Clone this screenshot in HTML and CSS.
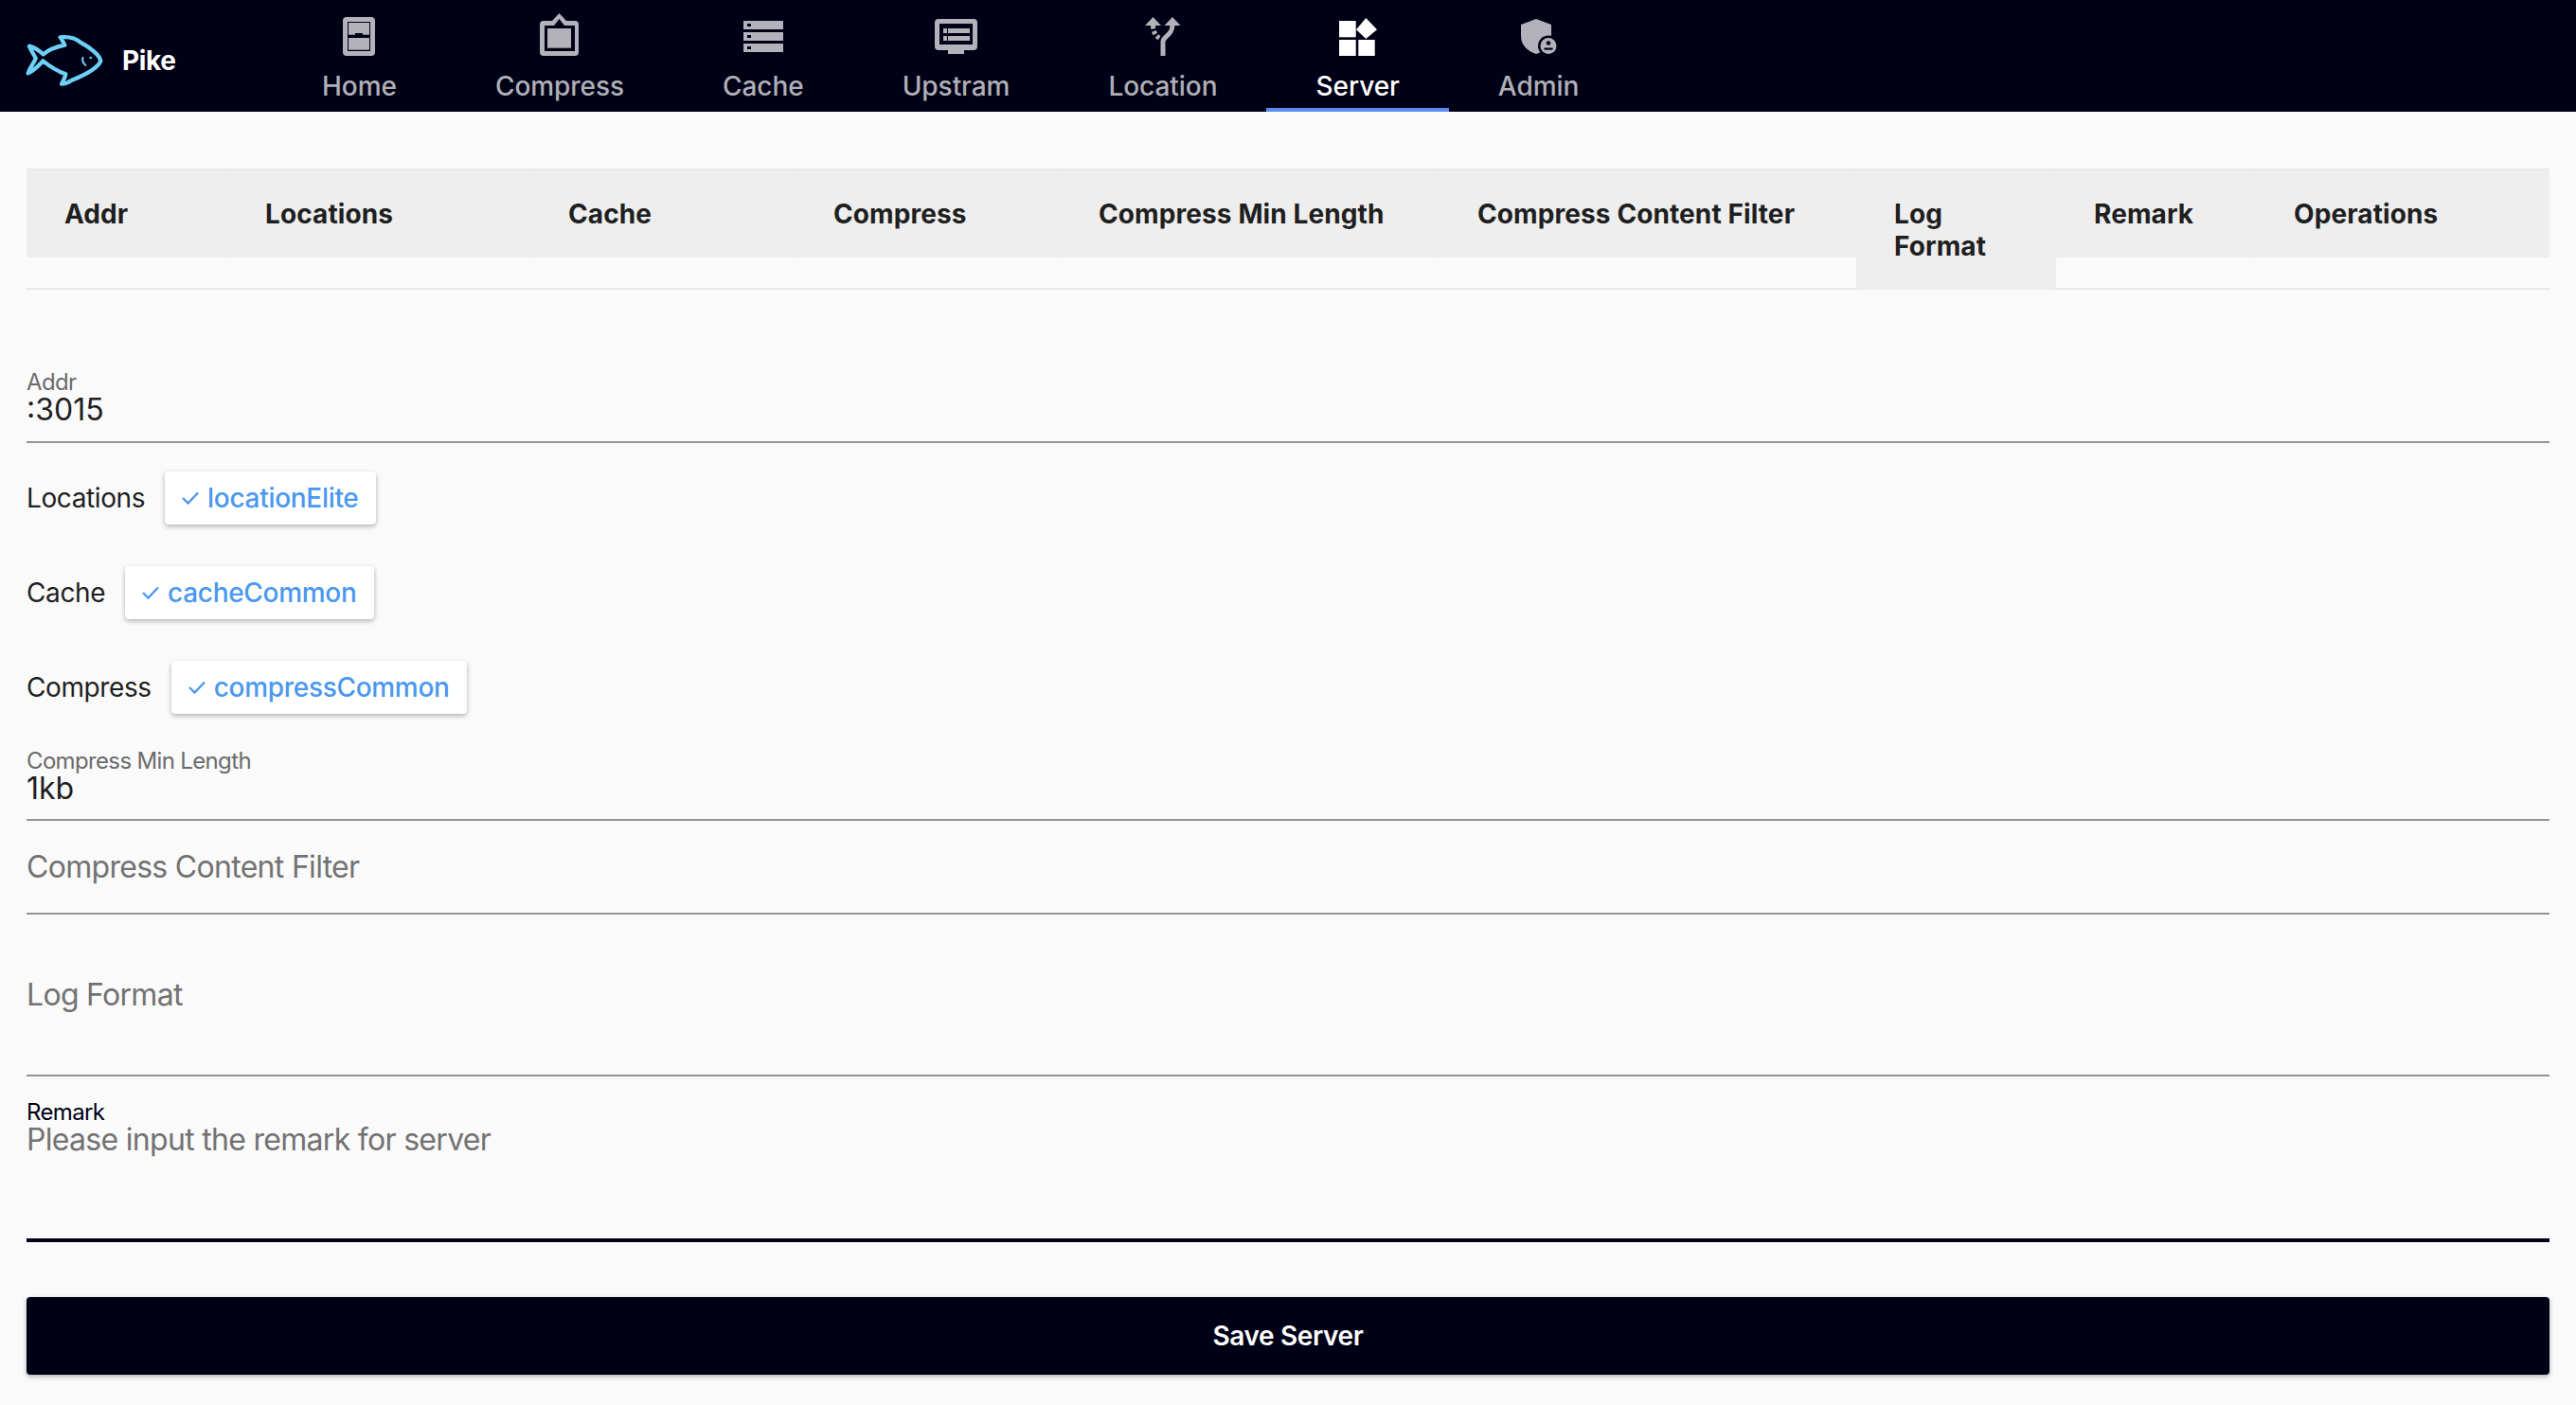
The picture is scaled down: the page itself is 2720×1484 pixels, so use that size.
FILE: index.html
```html
<!DOCTYPE html>
<html lang="en">

<head>
    <meta charset="UTF-8">
    <title>Pike</title>
    <link rel="stylesheet" href="styles.css">
</head>

<body>
    <!-- top navigation -->
    <header class="nav">
        <div class="logo">
            <svg class="fish" width="84" height="55" viewBox="80 78 252 165" fill="none" stroke="#6fd0f5" stroke-width="13" stroke-linejoin="round">
                <path d="M92 116 C105 118 122 130 136 142 C150 130 170 120 204 113 C200 105 195 95 190 88 C215 85 240 92 255 105 C285 120 315 145 318 163 C310 185 275 205 225 225 C215 232 205 236 194 236 C200 225 205 215 207 205 C180 195 150 175 135 163 C120 180 105 195 88 202 C95 180 110 165 112 155 C105 140 97 130 92 116 Z" />
                <path d="M262 150 C258 160 262 172 272 178" stroke-width="6" />
                <circle cx="286" cy="153" r="4" fill="#6fd0f5" stroke="none" />
            </svg>
            <span class="logo-name">Pike</span>
        </div>
        <nav class="tabs">
            <a class="tab">
                <span class="tab-icon">
                    <svg width="34" height="41" viewBox="0 0 34 41">
                        <rect width="34" height="41" rx="4" fill="#b3b2ba" />
                        <rect x="5" y="5" width="24" height="31" fill="#000016" />
                        <path d="M6 6 H28 V18.7 H21 V17 H13 V18.7 H6 Z" fill="#b3b2ba" />
                        <rect x="6" y="22" width="22" height="12.7" fill="#b3b2ba" />
                    </svg>
                </span>
                <span>Home</span>
            </a>
            <a class="tab">
                <span class="tab-icon">
                    <svg width="41" height="49" viewBox="0 0 41 49">
                        <path d="M4 8 H13 L20.5 0 L28 8 H37 Q41 8 41 12 V41 Q41 45 37 45 H4 Q0 45 0 41 V12 Q0 8 4 8 Z" fill="#b3b2ba" />
                        <path d="M20.5 6 L15 13 H26 Z" fill="#000016" />
                        <rect x="5" y="13" width="32" height="27" fill="#000016" />
                        <rect x="8" y="16" width="25" height="20.7" fill="#b3b2ba" />
                    </svg>
                </span>
                <span>Compress</span>
            </a>
            <a class="tab">
                <span class="tab-icon">
                    <svg width="42" height="33" viewBox="0 0 42 33" fill="#b3b2ba">
                        <path d="M0 0 H42 V9 H0 Z M4 3 V6 H8 V3 Z" fill-rule="evenodd" />
                        <path d="M0 12 H42 V21 H0 Z M4 15 V18 H8 V15 Z" fill-rule="evenodd" />
                        <path d="M0 24 H42 V33 H0 Z M4 27 V30 H8 V27 Z" fill-rule="evenodd" />
                    </svg>
                </span>
                <span>Cache</span>
            </a>
            <a class="tab">
                <span class="tab-icon">
                    <svg width="45" height="37" viewBox="0 0 45 37" fill="#b3b2ba">
                        <rect width="45" height="33" rx="4" />
                        <rect x="14" y="33" width="17" height="4" />
                        <rect x="5" y="5" width="35" height="22" fill="#000016" />
                        <rect x="9" y="10" width="4" height="5" />
                        <rect x="14" y="10" width="23" height="5" />
                        <rect x="9" y="18" width="4" height="5" />
                        <rect x="14" y="18" width="23" height="5" />
                    </svg>
                </span>
                <span>Upstram</span>
            </a>
            <a class="tab">
                <span class="tab-icon">
                    <svg width="38" height="41" viewBox="0 0 38 41" fill="#b3b2ba">
                        <path d="M29 0 L37.5 9 H20.5 Z" />
                        <path d="M8.5 0 L17 9 H0 Z" />
                        <path d="M19 41 V26 C19 20 29 20 29 8" fill="none" stroke="#b3b2ba" stroke-width="5" />
                        <path d="M8.5 9 C8.5 14 10 19 16 23" fill="none" stroke="#b3b2ba" stroke-width="5" stroke-dasharray="3.5 2.5" />
                    </svg>
                </span>
                <span>Location</span>
            </a>
            <a class="tab active">
                <span class="tab-icon">
                    <svg width="40" height="40" viewBox="0 0 40 40" fill="#fff">
                        <rect x="0" y="3" width="17.7" height="17.3" />
                        <rect x="0" y="23" width="17.7" height="17" />
                        <rect x="20.3" y="23" width="17.4" height="17" />
                        <path d="M28.3 0 L40 12.2 L28.3 22 L18 12.2 Z" />
                    </svg>
                </span>
                <span>Server</span>
            </a>
            <a class="tab">
                <span class="tab-icon">
                    <svg width="38" height="37" viewBox="0 0 38 37" fill="#b3b2ba">
                        <path d="M16 0 L32 6 V18 C32 28 25 34 16 37 C7 34 0 28 0 18 V6 Z" />
                        <circle cx="29" cy="28.5" r="11" fill="#000016" />
                        <circle cx="29" cy="28.5" r="8.5" />
                        <circle cx="29" cy="25.5" r="2.3" fill="#000016" />
                        <rect x="24.5" y="30.5" width="9" height="2.2" fill="#000016" />
                    </svg>
                </span>
                <span>Admin</span>
            </a>
        </nav>
    </header>

    <main class="content">
        <!-- empty table, only the head -->
        <div class="table-head">
            <div class="th">Addr</div>
            <div class="th">Locations</div>
            <div class="th">Cache</div>
            <div class="th">Compress</div>
            <div class="th">Compress Min Length</div>
            <div class="th">Compress Content Filter</div>
            <div class="th">Log Format</div>
            <div class="th">Remark</div>
            <div class="th">Operations</div>
        </div>

        <form class="server-form">
            <div class="field field-addr">
                <div class="field-label">Addr</div>
                <div class="field-value">:3015</div>
            </div>

            <div class="select-row first">
                <span class="select-label">Locations</span>
                <button type="button" class="chip">
                    <svg width="18" height="14" viewBox="0 0 18 14" fill="none" stroke="#4a98ee" stroke-width="2.4"><path d="M1 7 L6.5 12.5 L17 1.5" /></svg>
                    locationElite
                </button>
            </div>
            <div class="select-row">
                <span class="select-label">Cache</span>
                <button type="button" class="chip">
                    <svg width="18" height="14" viewBox="0 0 18 14" fill="none" stroke="#4a98ee" stroke-width="2.4"><path d="M1 7 L6.5 12.5 L17 1.5" /></svg>
                    cacheCommon
                </button>
            </div>
            <div class="select-row">
                <span class="select-label">Compress</span>
                <button type="button" class="chip">
                    <svg width="18" height="14" viewBox="0 0 18 14" fill="none" stroke="#4a98ee" stroke-width="2.4"><path d="M1 7 L6.5 12.5 L17 1.5" /></svg>
                    compressCommon
                </button>
            </div>

            <div class="field field-min">
                <div class="field-label">Compress Min Length</div>
                <div class="field-value">1kb</div>
            </div>
            <div class="field field-filter">
                <div class="field-empty">Compress Content Filter</div>
            </div>
            <div class="field field-log">
                <div class="field-empty">Log Format</div>
            </div>
            <div class="field field-remark">
                <div class="field-label focused">Remark</div>
                <div class="field-empty">Please input the remark for server</div>
            </div>

            <button type="button" class="save-btn">Save Server</button>
        </form>
    </main>
</body>

</html>
```

FILE: styles.css
```css
/* page */
body {
    margin: 0;
    min-height: 1484px;
    background-color: #fafafa;
    font-family: Inter, "Liberation Sans", sans-serif;
    font-size: 28px;
    color: #1f1f1f;
}

/* top navigation */
.nav {
    display: flex;
    height: 118px;
    background-color: #000016;
}

.logo {
    display: flex;
    align-items: center;
    gap: 18px;
    box-sizing: border-box;
    width: 288px;
    height: 118px;
    padding: 8px 0 0 27px;
}

.logo-name {
    margin-top: 1px;
    color: #fff;
    font-weight: 700;
    font-size: 28px;
    letter-spacing: -0.4px;
}

.tabs {
    display: flex;
}

.tab {
    display: flex;
    flex-direction: column;
    align-items: center;
    box-sizing: border-box;
    height: 118px;
    padding: 14px 52px 0;
    color: rgba(255, 255, 255, 0.7);
    font-weight: 500;
    line-height: 34px;
    letter-spacing: -0.05px;
}

.tab.active {
    color: #fff;
    border-bottom: 4px solid #5a8cf0;
}

.tab-icon {
    display: flex;
    align-items: center;
    justify-content: center;
    height: 49px;
    margin-bottom: 11px;
}

/* table head */
.content {
    padding: 60px 28px 0;
}

.table-head {
    display: grid;
    grid-template-columns: 212px 320px 280px 280px 400px 440px 211px 211px 310px;
    align-items: start;
    height: 124px;
    border-top: 2px solid #e8e8e8;
    border-bottom: 2px solid #e8e8e8;
}

.th {
    padding: 29px 40px;
    background-color: #eeeeee;
    box-shadow: inset -1px 0 0 #ebebeb;
    font-weight: 700;
    line-height: 34px;
    letter-spacing: 0.1px;
}

/* form fields */
.server-form {
    padding-top: 84px;
}

.field {
    box-sizing: border-box;
    border-bottom: 2px solid #949494;
}

.field-label {
    height: 24px;
    color: #6b6b6b;
    font-size: 24px;
    line-height: 28px;
    letter-spacing: -0.65px;
}

.field-label.focused {
    color: #000016;
}

.field-value,
.field-empty {
    height: 38px;
    font-size: 32px;
    line-height: 38px;
}

.field-empty {
    color: #727272;
    letter-spacing: -0.7px;
}

.field-addr {
    height: 78px;
}

.field-min {
    height: 77px;
    margin-top: 36px;
}

.field-filter {
    height: 99px;
    padding-top: 30px;
}

.field-log {
    height: 171px;
    padding-top: 66px;
}

.field-remark {
    height: 175px;
    padding-top: 24px;
    border-bottom: 4px solid #000016;
}

.select-row {
    display: flex;
    align-items: center;
    gap: 21px;
    margin-top: 44px;
    letter-spacing: -0.4px;
}

.select-row.first {
    margin-top: 30px;
}

.select-label {
    line-height: 34px;
}

.chip {
    display: flex;
    align-items: center;
    gap: 9px;
    height: 56px;
    padding: 0 18px;
    border: none;
    border-radius: 4px;
    background-color: #fff;
    box-shadow: 0 2px 5px rgba(0, 0, 0, 0.3);
    color: #4a98ee;
    font-family: inherit;
    font-size: 28px;
    font-weight: 500;
    letter-spacing: -0.3px;
}

.save-btn {
    display: block;
    width: 100%;
    height: 82px;
    margin-top: 58px;
    border: none;
    border-radius: 4px;
    background-color: #000016;
    box-shadow: 0 2px 5px rgba(0, 0, 0, 0.3);
    color: #fff;
    font-family: inherit;
    font-size: 28px;
    font-weight: 600;
    letter-spacing: -0.4px;
}
```
